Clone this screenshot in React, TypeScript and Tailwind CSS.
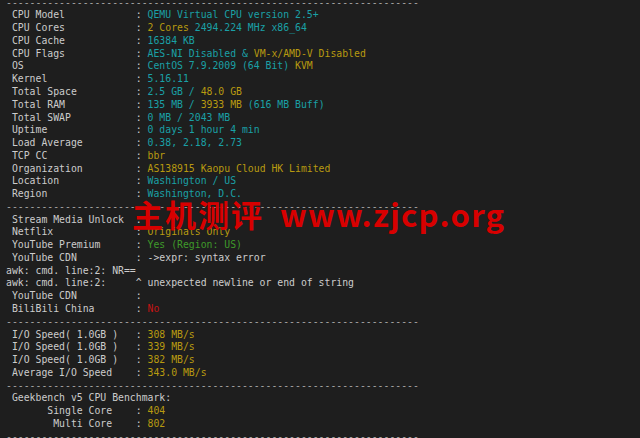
import React from "react";

type Seg = [string, string?];

const T = "text-[#1aa0a6]";
const Y = "text-[#b89a10]";
const G = "text-[#3f9a2a]";
const R = "text-[#c41414]";

const dash = "-".repeat(70);

// label padded to col 22, then ": "
const kv = (label: string, ...vals: Seg[]): Seg[] => [
  [(" " + label).padEnd(22, " ") + ": "],
  ...vals,
];

const lines: Seg[][] = [
  [[dash, "text-[#a8a8a8]"]],
  kv("CPU Model", ["QEMU Virtual CPU version 2.5+", T]),
  kv("CPU Cores", ["2 Cores", Y], [" 2494.224 MHz x86_64", T]),
  kv("CPU Cache", ["16384 KB", T]),
  kv("CPU Flags", ["AES-NI Disabled & ", T], ["VM-x/AMD-V Disabled", Y]),
  kv("OS", ["CentOS 7.9.2009 (64 Bit)", T], [" KVM", Y]),
  kv("Kernel", ["5.16.11", T]),
  kv("Total Space", ["2.5 GB / ", T], ["48.0 GB", Y]),
  kv("Total RAM", ["135 MB / ", T], ["3933 MB", Y], [" (616 MB Buff)", T]),
  kv("Total SWAP", ["0 MB / 2043 MB", T]),
  kv("Uptime", ["0 days 1 hour 4 min", T]),
  kv("Load Average", ["0.38, 2.18, 2.73", T]),
  kv("TCP CC", ["bbr", Y]),
  kv("Organization", ["AS138915 Kaopu Cloud HK Limited", Y]),
  kv("Location", ["Washington / US", T]),
  kv("Region", ["Washington, D.C.", T]),
  [[dash, "text-[#a8a8a8]"]],
  kv("Stream Media Unlock"),
  kv("Netflix", ["Originals Only", Y]),
  kv("YouTube Premium", ["Yes (Region: US)", G]),
  kv("YouTube CDN", ["->expr: syntax error"]),
  [["awk: cmd. line:2: NR=="]],
  [["awk: cmd. line:2:     ^ unexpected newline or end of string"]],
  kv("YouTube CDN"),
  kv("BiliBili China", ["No", R]),
  [[dash, "text-[#a8a8a8]"]],
  kv("I/O Speed( 1.0GB )", ["308 MB/s", Y]),
  kv("I/O Speed( 1.0GB )", ["339 MB/s", Y]),
  kv("I/O Speed( 1.0GB )", ["382 MB/s", Y]),
  kv("Average I/O Speed", ["343.0 MB/s", Y]),
  [[dash, "text-[#a8a8a8]"]],
  [[" Geekbench v5 CPU Benchmark:"]],
  [["       Single Core".padEnd(22, " ") + ": "], ["404", Y]],
  [["        Multi Core".padEnd(22, " ") + ": "], ["802", Y]],
  [[dash, "text-[#a8a8a8]"]],
];

export default function App() {
  return (
    <div className="relative w-[640px] h-[438px] overflow-hidden bg-[#1e1e1e]">
      <pre className="mt-[-3.4px] pl-[6px] font-['DejaVu_Sans_Mono',monospace] text-[9.8px] leading-[12.78px] text-[#cccccc] whitespace-pre">
        {lines.map((segs, i) => (
          <div key={i} className="h-[12.78px]">
            {segs.map(([txt, cls], j) => (
              <span key={j} className={cls}>
                {txt}
              </span>
            ))}
          </div>
        ))}
      </pre>

      {/* watermark */}
      <div className="absolute left-[132px] top-[194px] flex items-baseline font-['Noto_Sans_CJK_SC','Noto_Sans',sans-serif] font-bold text-[31px] leading-[40px] text-[#d80000] whitespace-nowrap">
        <span className="tracking-[2px]">主机测评</span>
        <span className="ml-[16px] tracking-[1.3px]">www.zjcp.org</span>
      </div>
    </div>
  );
}
